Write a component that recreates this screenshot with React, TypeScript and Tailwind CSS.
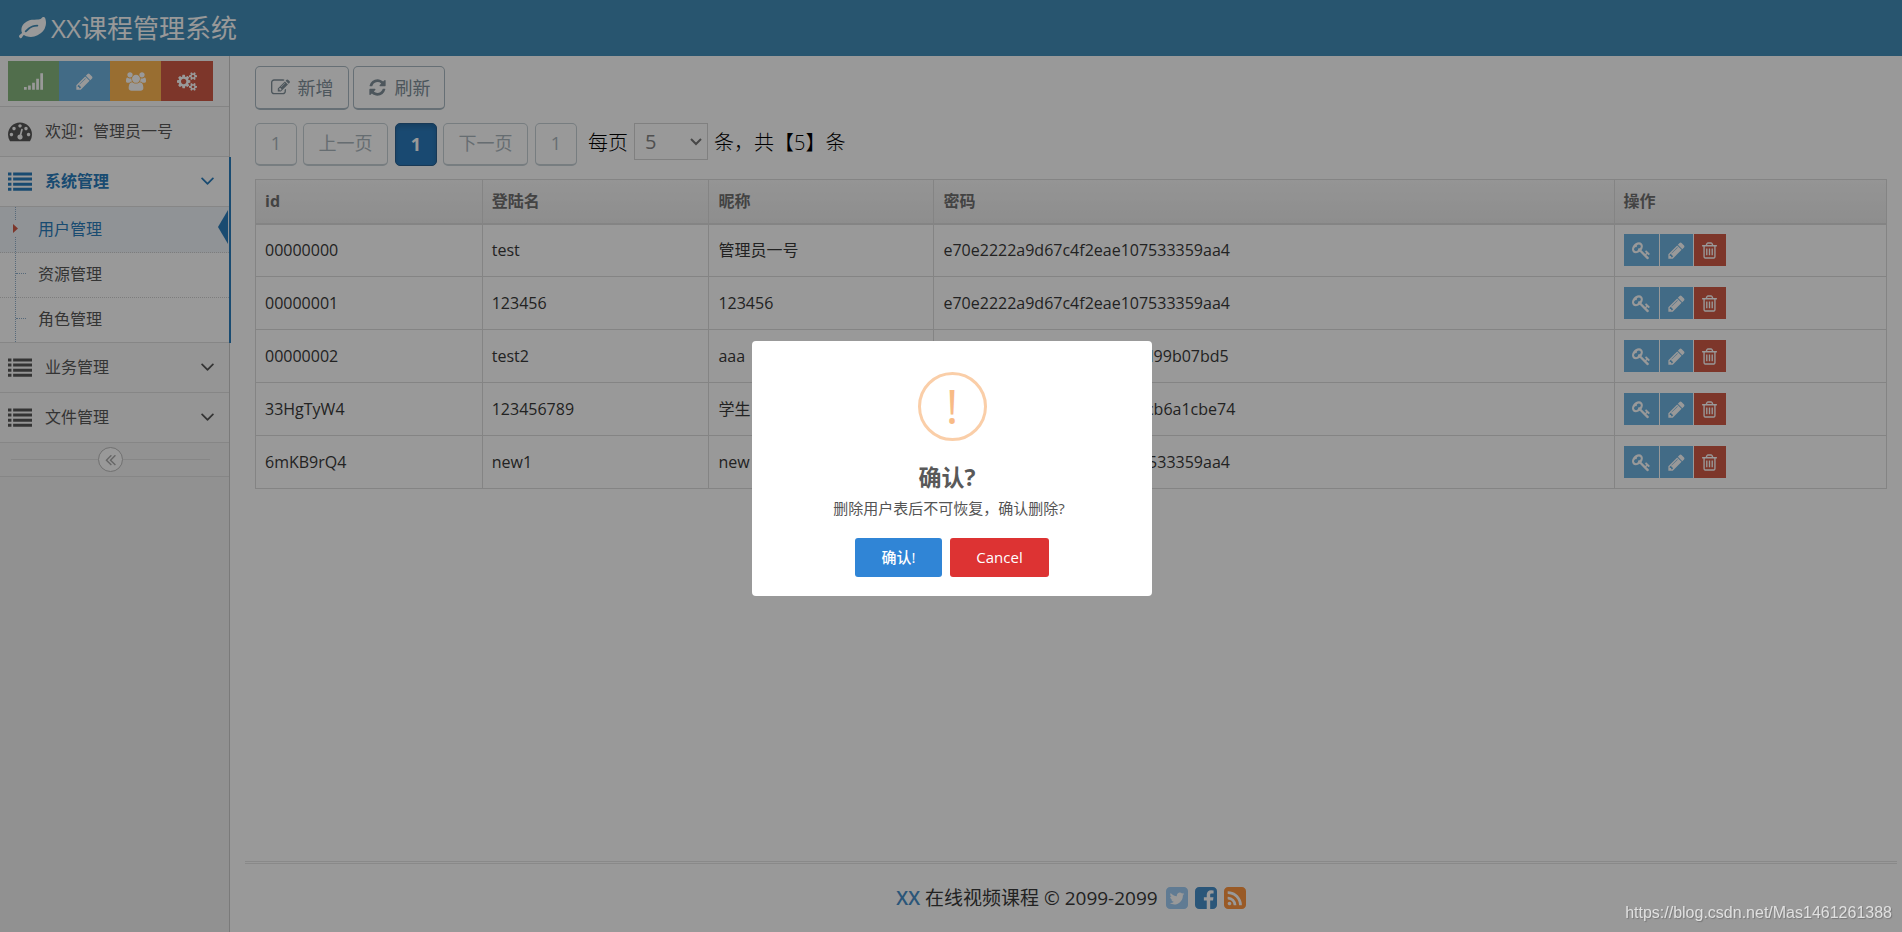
import React, { useState } from "react";

// Font Awesome 4 outlines, 1792 units per em
const icons = {
  leaf: "M1280 704q0-26-19-45t-45-19q-172 0-318 49.5t-259.5 134-235.5 219.5q-19 21-19 45 0 26 19 45t45 19q24 0 45-19 27-24 74-71t67-66q137-124 268.5-176t313.5-52q26 0 45-19t19-45zm512-198q0 95-20 193-46 224-184.5 383t-357.5 268q-214 108-438 108-148 0-286-47-15-5-88-42t-96-37q-16 0-39.5 32t-45 70-52.5 70-60 32q-43 0-63.5-17.5t-45.5-59.5q-2-4-6-11t-5.5-10-3-9.5-1.5-13.5q0-35 31-73.5t68-65.5 68-56 31-48q0-4-14-38t-16-44q-9-51-9-104 0-115 43.5-220t119-184.5 170.5-139 204-95.5q55-18 145-25.5t179.5-9 178.5-6 163.5-24 113.5-56.5l29.5-29.5 29.5-28 27-20 36.5-16 43.5-4.5q39 0 70.5 46t47.5 112 24 124 8 96z",
  signal: "M0 1408h256v256h-256zM384 1280h256v384h-256zM768 1024h256v640h-256zM1152 640h256v1024h-256zM1536 128h256v1536h-256z",
  pencil: "M491 1536l91-91-235-235-91 91v107h128v128h107zm523-928q0-22-22-22-10 0-17 7l-542 542q-7 7-7 17 0 22 22 22 10 0 17-7l542-542q7-7 7-17zm-54-192l416 416-832 832h-416v-416zm683 96q0 53-37 90l-166 166-416-416 166-165q36-38 90-38 53 0 91 38l235 234q37 39 37 91z",
  users: "M593 896q-162 5-265 128h-134q-82 0-138-40.5t-56-118.5q0-353 124-353 6 0 43.5 21t97.5 42.5 119 21.5q67 0 133-23-5 37-5 66 0 139 81 256zm1071 637q0 120-73 189.5t-194 69.5h-874q-121 0-194-69.5t-73-189.5q0-53 3.5-103.5t14-109 26.5-108.5 43-97.5 62-81 85.5-53.5 111.5-20q10 0 43 21.5t73 48 107 48 135 21.5 135-21.5 107-48 73-48 43-21.5q61 0 111.5 20t85.5 53.5 62 81 43 97.5 26.5 108.5 14 109 3.5 103.5zm-1024-1277q0 106-75 181t-181 75-181-75-75-181 75-181 181-75 181 75 75 181zm704 384q0 159-112.5 271.5t-271.5 112.5-271.5-112.5-112.5-271.5 112.5-271.5 271.5-112.5 271.5 112.5 112.5 271.5zm576 225q0 78-56 118.5t-138 40.5h-134q-103-123-265-128 81-117 81-256 0-29-5-66 66 23 133 23 59 0 119-21.5t97.5-42.5 43.5-21q124 0 124 353zm-128-609q0 106-75 181t-181 75-181-75-75-181 75-181 181-75 181 75 75 181z",
  cogs: "M896 896q0-106-75-181t-181-75-181 75-75 181 75 181 181 75 181-75 75-181zm768 512q0-52-38-90t-90-38-90 38-38 90q0 53 37.5 90.5t90.5 37.5 90.5-37.5 37.5-90.5zm0-1024q0-52-38-90t-90-38-90 38-38 90q0 53 37.5 90.5t90.5 37.5 90.5-37.5 37.5-90.5zm-384 421v185q0 10-7 19.5t-16 10.5l-155 24q-11 35-32 76 34 48 90 115 7 11 7 20 0 12-7 19-23 30-82.5 89.5t-78.5 59.5q-11 0-21-7l-115-90q-37 19-77 31-11 108-23 155-7 24-30 24h-186q-11 0-20-7.5t-10-17.5l-23-153q-34-10-75-31l-118 89q-7 7-20 7-11 0-21-8-144-133-144-160 0-9 7-19 10-14 41-53t47-61q-23-44-35-82l-152-24q-10-1-17-9.5t-7-19.5v-185q0-10 7-19.5t16-10.5l155-24q11-35 32-76-34-48-90-115-7-11-7-20 0-12 7-20 22-30 82-89t79-59q11 0 21 7l115 90q34-18 77-32 11-108 23-154 7-24 30-24h186q11 0 20 7.5t10 17.5l23 153q34 10 75 31l118-89q8-7 20-7 11 0 21 8 144 133 144 160 0 8-7 19-12 16-42 54t-45 60q23 48 34 82l152 23q10 2 17 10.5t7 19.5zm640 533v140q0 16-149 31-12 27-30 52 51 113 51 138 0 4-4 7-122 71-124 71-8 0-46-47t-52-68q-20 2-30 2t-30-2q-14 21-52 68t-46 47q-2 0-124-71-4-3-4-7 0-25 51-138-18-25-30-52-149-15-149-31v-140q0-16 149-31 13-29 30-52-51-113-51-138 0-4 4-7 4-2 35-20t59-34 30-16q8 0 46 46.5t52 67.5q20-2 30-2t30 2q51-71 92-112l6-2q4 0 124 70 4 3 4 7 0 25-51 138 17 23 30 52 149 15 149 31zm0-1024v140q0 16-149 31-12 27-30 52 51 113 51 138 0 4-4 7-122 71-124 71-8 0-46-47t-52-68q-20 2-30 2t-30-2q-14 21-52 68t-46 47q-2 0-124-71-4-3-4-7 0-25 51-138-18-25-30-52-149-15-149-31v-140q0-16 149-31 13-29 30-52-51-113-51-138 0-4 4-7 4-2 35-20t59-34 30-16q8 0 46 46.5t52 67.5q20-2 30-2t30 2q51-71 92-112l6-2q4 0 124 70 4 3 4 7 0 25-51 138 17 23 30 52 149 15 149 31z",
  dashboard: "M384 1152q0-53-37.5-90.5t-90.5-37.5-90.5 37.5-37.5 90.5 37.5 90.5 90.5 37.5 90.5-37.5 37.5-90.5zm192-448q0-53-37.5-90.5t-90.5-37.5-90.5 37.5-37.5 90.5 37.5 90.5 90.5 37.5 90.5-37.5 37.5-90.5zm428 481l101-382q6-26-7.5-48.5t-38.5-29.5-48 6.5-30 39.5l-101 382q-60 5-107 43.5t-63 98.5q-20 77 20 146t117 89 146-20 89-117q16-60-6-117t-72-91zm660-33q0-53-37.5-90.5t-90.5-37.5-90.5 37.5-37.5 90.5 37.5 90.5 90.5 37.5 90.5-37.5 37.5-90.5zm-640-640q0-53-37.5-90.5t-90.5-37.5-90.5 37.5-37.5 90.5 37.5 90.5 90.5 37.5 90.5-37.5 37.5-90.5zm448 192q0-53-37.5-90.5t-90.5-37.5-90.5 37.5-37.5 90.5 37.5 90.5 90.5 37.5 90.5-37.5 37.5-90.5zm320 448q0 261-141 483-19 29-54 29h-1402q-35 0-54-29-141-221-141-483 0-182 71-348t191-286 286-191 348-71 348 71 286 191 191 286 71 348z",
  list: "M0 256h256v224h-256zM384 256h1408v224h-1408zM0 640h256v224h-256zM384 640h1408v224h-1408zM0 1024h256v224h-256zM384 1024h1408v224h-1408zM0 1408h256v224h-256zM384 1408h1408v224h-1408z",
  key: "M832 512q0-80-56-136t-136-56-136 56-56 136q0 42 19 83-41-19-83-19-80 0-136 56t-56 136 56 136 136 56 136-56 56-136q0-42-19-83 41 19 83 19 80 0 136-56t56-136zm851 704q0 17-49 66t-66 49q-9 0-28.5-16t-36.5-33-38.5-40-24.5-26l-96 96 220 220q28 28 28 68 0 42-39 81t-81 39q-40 0-68-28l-671-671q-176 131-365 131-163 0-265.5-102.5t-102.5-265.5q0-160 95-313t248-248 313-95q163 0 265.5 102.5t102.5 265.5q0 189-131 365l355 355 96-96q-3-3-26-24.5t-40-38.5-33-36.5-16-28.5q0-17 49-66t66-49q13 0 23 10 6 6 46 44.5t82 79.5 86.5 86 73 78 28.5 41z",
  trash: "M704 736v576q0 14-9 23t-23 9h-64q-14 0-23-9t-9-23v-576q0-14 9-23t23-9h64q14 0 23 9t9 23zm256 0v576q0 14-9 23t-23 9h-64q-14 0-23-9t-9-23v-576q0-14 9-23t23-9h64q14 0 23 9t9 23zm256 0v576q0 14-9 23t-23 9h-64q-14 0-23-9t-9-23v-576q0-14 9-23t23-9h64q14 0 23 9t9 23zm128 724v-948h-896v948q0 22 7 40.5t14.5 27 10.5 8.5h832q3 0 10.5-8.5t14.5-27 7-40.5zm-672-1076h448l-48-117q-7-9-17-11h-317q-10 2-17 11zm928 32v64q0 14-9 23t-23 9h-96v948q0 83-47 143.5t-113 60.5h-832q-66 0-113-58.5t-47-141.5v-952h-96q-14 0-23-9t-9-23v-64q0-14 9-23t23-9h309l70-167q15-37 54-63t79-26h320q40 0 79 26t54 63l70 167h309q14 0 23 9t9 23z",
  edit: "M888 1184l116-116-152-152-116 116v56h96v96h56zm440-720q-16-16-33 1l-350 350q-17 17-1 33t33-1l350-350q17-17 1-33zm80 594v190q0 119-84.5 203.5t-203.5 84.5h-832q-119 0-203.5-84.5t-84.5-203.5v-832q0-119 84.5-203.5t203.5-84.5h832q63 0 117 25 15 7 18 23 3 17-9 29l-49 49q-14 14-32 8-23-6-45-6h-832q-66 0-113 47t-47 113v832q0 66 47 113t113 47h832q66 0 113-47t47-113v-126q0-13 9-22l64-64q15-15 35-7t20 29zm-96-738l288 288-672 672h-288v-288zm444 132l-92 92-288-288 92-92q28-28 68-28t68 28l152 152q28 28 28 68t-28 68z",
  refresh: "M1639 1056q0 5-1 7-64 268-268 434.5t-478 166.5q-146 0-282.5-55t-243.5-157l-129 129q-19 19-45 19t-45-19-19-45v-448q0-26 19-45t45-19h448q26 0 45 19t19 45-19 45l-137 137q71 66 161 102t187 36q134 0 250-65t186-179q11-17 53-117 8-23 30-23h192q13 0 22.5 9.5t9.5 22.5zm25-800v448q0 26-19 45t-45 19h-448q-26 0-45-19t-19-45 19-45l138-138q-148-137-349-137-134 0-250 65t-186 179q-11 17-53 117-8 23-30 23h-199q-13 0-22.5-9.5t-9.5-22.5v-7q65-268 270-434.5t480-166.5q146 0 284 55.5t245 156.5l130-129q19-19 45-19t45 19 19 45z",
  angleDown: "M1395 736q0 13-10 23l-466 466q-10 10-23 10t-23-10l-466-466q-10-10-10-23t10-23l50-50q10-10 23-10t23 10l393 393 393-393q10-10 23-10t23 10l50 50q10 10 10 23z",
  doubleLeft: "M1011 1376q0 13-10 23l-50 50q-10 10-23 10t-23-10l-466-466q-10-10-10-23t10-23l466-466q10-10 23-10t23 10l50 50q10 10 10 23t-10 23l-393 393 393 393q10 10 10 23zm384 0q0 13-10 23l-50 50q-10 10-23 10t-23-10l-466-466q-10-10-10-23t10-23l466-466q10-10 23-10t23 10l50 50q10 10 10 23t-10 23l-393 393 393 393q10 10 10 23z",
  twitter: "M1408 610q-56 25-121 34 68-40 93-117-65 38-134 51-61-66-153-66-87 0-148.5 61.5t-61.5 148.5q0 29 5 48-129-7-242-65t-192-155q-29 50-29 106 0 114 91 175-47-1-100-26v2q0 75 50 133.5t123 72.5q-29 8-51 8-13 0-39-4 21 63 74.5 104t121.5 42q-116 90-261 90-26 0-50-3 148 94 322 94 112 0 210-35.5t168-95 120.5-137 75-162 24.5-168.5q0-18-1-27 63-45 105-109zm256-194v960q0 119-84.5 203.5t-203.5 84.5h-960q-119 0-203.5-84.5t-84.5-203.5v-960q0-119 84.5-203.5t203.5-84.5h960q119 0 203.5 84.5t84.5 203.5z",
  facebook: "M1376 128q119 0 203.5 84.5t84.5 203.5v960q0 119-84.5 203.5t-203.5 84.5h-188v-595h199l30-232h-229v-148q0-56 23.5-84t91.5-28l122-1v-207q-63-9-178-9-136 0-217.5 80t-81.5 226v171h-200v232h200v595h-532q-119 0-203.5-84.5t-84.5-203.5v-960q0-119 84.5-203.5t203.5-84.5h960z",
  rss: "M640 1280q0-53-37.5-90.5t-90.5-37.5-90.5 37.5-37.5 90.5 37.5 90.5 90.5 37.5 90.5-37.5 37.5-90.5zm351 94q-13-232-177-396t-396-177q-14-1-24 9t-10 23v128q0 13 8.5 22t21.5 10q154 11 264 121t121 264q1 13 10 21.5t22 8.5h128q13 0 23-10t9-24zm384 1q-5-154-56-297.5t-139.5-260-205-205-260-139.5-297.5-56q-14-1-23 9-10 10-10 23v128q0 13 9 22t22 10q204 7 378 111.5t278.5 278.5 111.5 378q1 13 10 22t22 9h128q13 0 23-10 11-9 9-23zm289-959v960q0 119-84.5 203.5t-203.5 84.5h-960q-119 0-203.5-84.5t-84.5-203.5v-960q0-119 84.5-203.5t203.5-84.5h960q119 0 203.5 84.5t84.5 203.5z",
};

interface IconProps {
  name: keyof typeof icons;
  className?: string;
  box?: string;
}

function Icon({ name, className, box = "0 0 1792 1792" }: IconProps) {
  return (
    <svg viewBox={box} className={className} fill="currentColor" aria-hidden="true">
      <path d={icons[name]} />
    </svg>
  );
}

const users = [
  { id: "00000000", loginName: "test", name: "管理员一号", password: "e70e2222a9d67c4f2eae107533359aa4" },
  { id: "00000001", loginName: "123456", name: "123456", password: "e70e2222a9d67c4f2eae107533359aa4" },
  { id: "00000002", loginName: "test2", name: "aaa", password: "5d1c9f0a7be3426f8a1e6c2d99b07bd5" },
  { id: "33HgTyW4", loginName: "123456789", name: "学生", password: "c48a70f2d9e15b36a7fd8e2cb6a1cbe74" },
  { id: "6mKB9rQ4", loginName: "new1", name: "new", password: "e70e2222a9d67c4f2eae107533359aa4" },
];

function Sidebar() {
  return (
    <aside className="w-[230px] shrink-0 border-r border-[#ccc] bg-[#f2f2f2] text-base text-[#585858]">
      <div className="flex border-b border-[#ddd] bg-[#fafafa] pt-[5px] pb-[5px] pl-2 text-white">
        <button type="button" aria-label="统计" className="flex h-10 w-[51px] items-center justify-center bg-[#87b87f]">
          <Icon name="signal" className="size-[19px]" />
        </button>
        <button type="button" aria-label="编辑" className="flex h-10 w-[51px] items-center justify-center bg-[#6fb3e0]">
          <Icon name="pencil" className="size-[19px]" />
        </button>
        <button type="button" aria-label="用户" className="flex h-10 w-[51px] items-center justify-center bg-[#ffb752]">
          <Icon name="users" box="0 0 1920 1792" className="h-[19px] w-5" />
        </button>
        <button type="button" aria-label="设置" className="flex h-10 w-[52px] items-center justify-center bg-[#d15b47]">
          <Icon name="cogs" box="0 0 1920 1792" className="h-[19px] w-5" />
        </button>
      </div>

      <nav>
        <a href="#welcome" className="flex h-[50px] items-center border-b border-[#e0e0e0] bg-[#f8f8f8] pb-[2px] pl-2">
          <Icon name="dashboard" className="size-6" />
          <span className="ml-[13px]">欢迎：管理员一号</span>
        </a>

        <div className="relative bg-white">
          <a href="#system" className="flex h-[50px] items-center border-b border-[#e0e0e0] pb-[2px] pl-2 font-bold text-[#2b7dbc]">
            <Icon name="list" className="size-6" />
            <span className="ml-[13px] flex-1">系统管理</span>
            <Icon name="angleDown" className="mr-[10px] size-[23px]" />
          </a>
          <div className="relative border-b border-[#e0e0e0]">
            <a href="#user" className="relative flex h-[46px] items-center border-b border-dotted border-[#d0d0d0] bg-[#f0f5fa] pb-[2px] pl-[38px] text-[#2b7dbc]">
              用户管理
              <svg viewBox="0 0 10 34" className="absolute top-[3px] right-px h-[34px] w-[10px]" fill="#2b7dbc">
                <path d="M10 0v34L0 17z" />
              </svg>
            </a>
            <a href="#resource" className="flex h-[45px] items-center border-b border-dotted border-[#d0d0d0] pb-[2px] pl-[38px]">
              资源管理
            </a>
            <a href="#role" className="flex h-11 items-center pb-[2px] pl-[38px]">
              角色管理
            </a>
            {/* tree lines and marker of the current page */}
            <span className="absolute top-0 bottom-0 left-[15px] border-l border-dotted border-[#8fb0cc]" />
            <span className="absolute top-[66px] left-4 w-[10px] border-t border-dotted border-[#8fb0cc]" />
            <span className="absolute top-[111px] left-4 w-[10px] border-t border-dotted border-[#8fb0cc]" />
            <svg viewBox="0 0 6 16" className="absolute top-[13px] left-[13px] h-4 w-[6px]">
              <path d="M0 0h6v16H0z" fill="#f0f5fa" />
              <path d="M0 4v9l5-4.500z" fill="#d15b47" />
            </svg>
          </div>
          <span className="absolute inset-y-0 -right-[2px] w-[2px] bg-[#2b7dbc]" />
        </div>

        <a href="#business" className="flex h-[50px] items-center border-b border-[#e0e0e0] bg-[#f8f8f8] pb-[2px] pl-2">
          <Icon name="list" className="size-6" />
          <span className="ml-[13px] flex-1">业务管理</span>
          <Icon name="angleDown" className="mr-[10px] size-[23px]" />
        </a>
        <a href="#file" className="flex h-[50px] items-center border-b border-[#e0e0e0] bg-[#f8f8f8] pb-[2px] pl-2">
          <Icon name="list" className="size-6" />
          <span className="ml-[13px] flex-1">文件管理</span>
          <Icon name="angleDown" className="mr-[10px] size-[23px]" />
        </a>
      </nav>

      <div className="flex h-[34px] items-center border-b border-[#e0e0e0] bg-[#f3f3f3] pr-[19px] pl-[11px]">
        <span className="h-px flex-1 bg-[#e0e0e0]" />
        <button type="button" aria-label="收起" className="flex size-[25px] items-center justify-center rounded-full border border-[#bbb] bg-white text-[#aaa]">
          <Icon name="doubleLeft" className="size-[19px]" />
        </button>
        <span className="h-px flex-1 bg-[#e0e0e0]" />
      </div>
    </aside>
  );
}

function Pagination() {
  const [size, setSize] = useState("5");
  const pageButton = "h-[43px] rounded-[5px] border border-b-2 border-[#c6d0d6] pb-[2px] text-lg text-[#abb6bd]";

  return (
    <div className="mt-[13px] flex items-start text-black">
      <button type="button" disabled className={`${pageButton} w-[42px]`}>1</button>
      <button type="button" disabled className={`${pageButton} ml-[6px] w-[85px]`}>上一页</button>
      <button type="button" className="ml-[7px] h-[43px] w-[42px] rounded-[5px] border border-[#286090] bg-[#2b7bbd] pb-[2px] text-lg font-bold text-white shadow-[inset_0_3px_5px_rgba(0,0,0,0.15)]">1</button>
      <button type="button" disabled className={`${pageButton} ml-[6px] w-[85px]`}>下一页</button>
      <button type="button" disabled className={`${pageButton} ml-[7px] w-[42px]`}>1</button>
      <label htmlFor="pageSize" className="ml-[11px] text-xl leading-10 font-light">每页</label>
      <div className="relative ml-[6px]">
        <select
          id="pageSize"
          value={size}
          onChange={e => setSize(e.target.value)}
          className="h-[37px] w-[74px] appearance-none border border-[#d5d5d5] bg-white pl-[10px] text-xl text-[#858585]"
        >
          <option value="1">1</option>
          <option value="5">5</option>
          <option value="10">10</option>
        </select>
        <svg viewBox="0 0 12 8" className="pointer-events-none absolute top-[15px] right-[6px] h-2 w-3" fill="none" stroke="#777" strokeWidth="2">
          <path d="M1 1l5 5 5-5" />
        </svg>
      </div>
      <span className="ml-[6px] text-xl leading-10 font-light">条，共【5】条</span>
    </div>
  );
}

function UserTable() {
  const cell = "border border-[#ddd] px-[9px]";

  return (
    <table className="mt-[13px] w-full table-fixed border-collapse text-left text-base">
      <colgroup>
        <col className="w-[13.9%]" />
        <col className="w-[13.9%]" />
        <col className="w-[13.8%]" />
        <col className="w-[41.7%]" />
        <col className="w-[16.7%]" />
      </colgroup>
      <thead className="bg-linear-to-b from-[#f8f8f8] to-[#ececec] text-[#707070]">
        <tr className="h-11 border-b-2 border-[#ddd]">
          <th className={cell}>id</th>
          <th className={cell}>登陆名</th>
          <th className={cell}>昵称</th>
          <th className={cell}>密码</th>
          <th className={cell}>操作</th>
        </tr>
      </thead>
      <tbody className="text-[#393939]">
        {users.map(user => (
          <tr key={user.id} className="h-[53px]">
            <td className={cell}>{user.id}</td>
            <td className={cell}>{user.loginName}</td>
            <td className={cell}>{user.name}</td>
            <td className={cell}>{user.password}</td>
            <td className={cell}>
              <div className="flex gap-px text-white">
                <button type="button" aria-label="重置密码" className="flex h-8 w-[35px] items-center justify-center bg-[#6fb3e0]">
                  <Icon name="key" className="size-[19px]" />
                </button>
                <button type="button" aria-label="编辑" className="flex h-8 w-[33px] items-center justify-center bg-[#6fb3e0]">
                  <Icon name="pencil" className="size-[19px]" />
                </button>
                <button type="button" aria-label="删除" className="flex h-8 w-8 items-center justify-center bg-[#d15b47]">
                  <Icon name="trash" className="size-[19px]" />
                </button>
              </div>
            </td>
          </tr>
        ))}
      </tbody>
    </table>
  );
}

function ConfirmDialog() {
  return (
    <div className="fixed inset-0 flex items-center justify-center bg-black/40 pt-1 pl-[2px]">
      <div role="dialog" aria-modal="true" aria-labelledby="confirmTitle" className="flex w-[400px] flex-col items-center rounded bg-white pt-[31px] pb-[19px] text-[#545454]">
        <div className="flex size-[69px] items-center justify-center rounded-full border-3 border-[#facea8] text-5xl text-[#f8bb86]">!</div>
        <h2 id="confirmTitle" className="mt-5 pr-[10px] text-[23px] leading-8 font-bold text-[#595959]">确认?</h2>
        <p className="mt-[5px] pr-[6px] text-[15px] leading-5">删除用户表后不可恢复，确认删除?</p>
        <div className="mt-5 flex gap-2 text-[15px] font-medium text-white">
          <button type="button" className="h-[39px] w-[87px] rounded-[3px] bg-[#3085d6]">确认!</button>
          <button type="button" className="h-[39px] w-[99px] rounded-[3px] bg-[#dd3333]">Cancel</button>
        </div>
      </div>
    </div>
  );
}

export default function App() {
  return (
    <div lang="zh-CN" className="flex min-h-screen flex-col bg-white font-['Open_Sans','Noto_Sans_CJK_SC',sans-serif] text-[#393939]">
      <header className="flex h-14 items-center bg-[#438eb9] pl-[19px] text-white">
        <Icon name="leaf" className="size-[27px]" />
        <h1 className="ml-[5px] text-[26px] leading-8">XX课程管理系统</h1>
      </header>

      <div className="flex flex-1">
        <Sidebar />
        <div className="flex min-w-0 flex-1 flex-col">
          <main className="flex-1 pt-[10px] pr-[15px] pl-[25px]">
            <div className="flex gap-1 text-lg text-[#80909a]">
              <button type="button" className="flex h-11 w-[94px] items-center justify-center gap-2 rounded-[5px] border border-b-2 border-[#abbac3]">
                <Icon name="edit" className="size-[19px]" />
                新增
              </button>
              <button type="button" className="flex h-11 w-[92px] items-center justify-center gap-2 rounded-[5px] border border-b-2 border-[#abbac3]">
                <Icon name="refresh" className="size-[19px]" />
                刷新
              </button>
            </div>
            <Pagination />
            <UserTable />
          </main>

          <footer className="mr-[5px] ml-[15px] flex h-[71px] items-center justify-center border-t-3 border-double border-[#e5e5e5] text-[19px]">
            <span className="mr-[5px] font-semibold text-[#478fca]">XX</span>
            <span>在线视频课程 © 2099-2099</span>
            <div className="ml-2 flex gap-[7px]">
              <a href="#twitter" aria-label="Twitter" className="text-[#a0cdf5]">
                <Icon name="twitter" box="128 128 1536 1536" className="size-[22px]" />
              </a>
              <a href="#facebook" aria-label="Facebook" className="text-[#478fca]">
                <Icon name="facebook" box="128 128 1536 1536" className="size-[22px]" />
              </a>
              <a href="#rss" aria-label="RSS" className="text-[#ff9640]">
                <Icon name="rss" box="128 128 1536 1536" className="size-[22px]" />
              </a>
            </div>
          </footer>
        </div>
      </div>

      <ConfirmDialog />
      <span className="fixed right-[10px] bottom-[7px] font-['Liberation_Sans',Arial,sans-serif] text-base text-[#e0e0e0] [text-shadow:1px_1px_1px_#777]">
        https://blog.csdn.net/Mas1461261388
      </span>
    </div>
  );
}
